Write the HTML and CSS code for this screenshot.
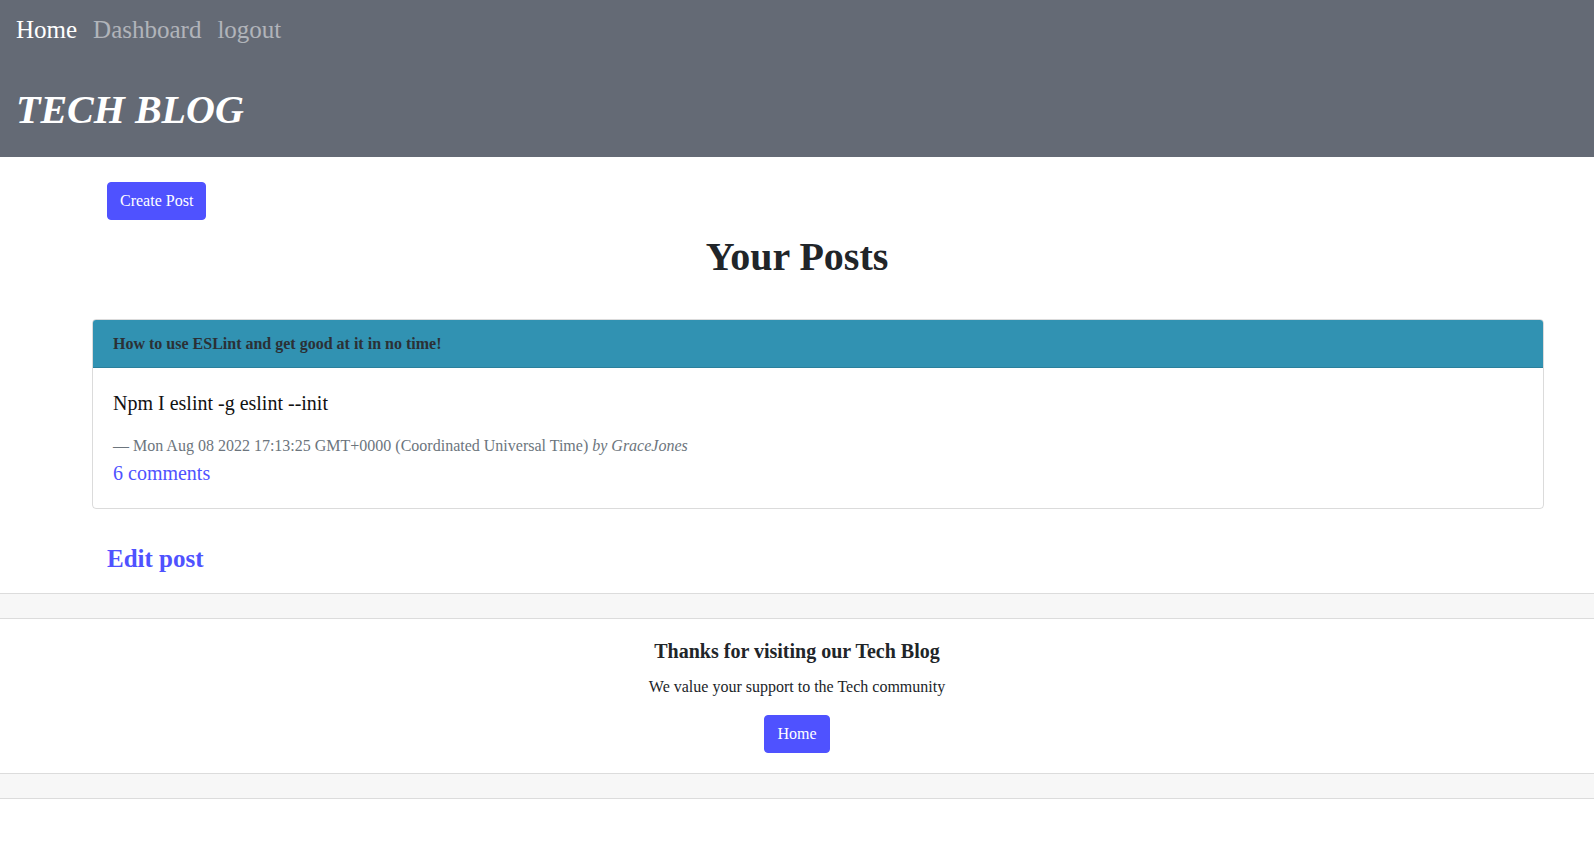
FILE: index.html
```html
<!DOCTYPE html>
<html lang="en">
<head>
<meta charset="utf-8">
<title>Tech Blog</title>
<link rel="stylesheet" href="styles.css">
</head>
<body>
<header class="site-header">
  <nav class="nav">
    <a class="nav-link active" href="#">Home</a>
    <a class="nav-link" href="#">Dashboard</a>
    <a class="nav-link" href="#">logout</a>
  </nav>
  <h1 class="brand">TECH BLOG</h1>
</header>
<main class="main">
  <div class="actions">
    <button class="btn">Create Post</button>
  </div>
  <h1 class="page-title">Your Posts</h1>
  <div class="card">
    <div class="card-header">How to use ESLint and get good at it in no time!</div>
    <div class="card-body">
      <p class="card-title">Npm I eslint -g eslint --init</p>
      <div class="post-meta">— Mon Aug 08 2022 17:13:25 GMT+0000 (Coordinated Universal Time) <cite>by GraceJones</cite></div>
      <a class="comments" href="#">6 comments</a>
    </div>
  </div>
  <a class="edit-link" href="#">Edit post</a>
</main>
<div class="bar"></div>
<footer class="site-footer">
  <h5 class="footer-title">Thanks for visiting our Tech Blog</h5>
  <p class="footer-text">We value your support to the Tech community</p>
  <button class="btn">Home</button>
</footer>
<div class="bar"></div>
</body>
</html>
```

FILE: styles.css
```css
* { box-sizing: border-box; }

html, body {
  margin: 0;
  padding: 0;
  background: #ffffff;
  font-family: "Liberation Serif", "Times New Roman", serif;
  color: #212529;
}

a { text-decoration: none; }

.site-header {
  background: #646a75;
  padding: 15px 16px 23px;
}

.nav {
  display: flex;
  gap: 16px;
  font-size: 25px;
  line-height: 30px;
}

.nav-link { color: rgba(255, 255, 255, 0.5); }
.nav-link.active { color: #ffffff; }

.brand {
  margin: 41px 0 0;
  font-size: 40px;
  line-height: 48px;
  font-weight: bold;
  font-style: italic;
  color: #ffffff;
}

.main {
  padding: 25px 50px 19px 92px;
}

.actions {
  padding-left: 15px;
}

.btn {
  display: inline-block;
  font-family: "Liberation Serif", "Times New Roman", serif;
  font-size: 16px;
  line-height: 24px;
  padding: 6px 12px;
  color: #ffffff;
  background: #4f52ff;
  border: 1px solid #4f52ff;
  border-radius: 4px;
  cursor: pointer;
}

.page-title {
  margin: 13px 0 38px -42px;
  text-align: center;
  font-size: 40px;
  line-height: 48px;
  font-weight: bold;
  color: #212529;
}

.card {
  border: 1px solid rgba(0, 0, 0, 0.14);
  border-radius: 4px;
  overflow: hidden;
}

.card-header {
  background: #3192b2;
  padding: 12px 20px 11px;
  font-size: 16px;
  line-height: 24px;
  font-weight: bold;
  color: #2b3035;
  border-bottom: 1px solid rgba(0, 0, 0, 0.12);
}

.card-body {
  padding: 20px;
  font-size: 20px;
  line-height: 30px;
}

.card-title {
  margin: 0 0 16px;
  font-size: 20px;
  line-height: 30px;
  color: #111111;
}

.post-meta {
  font-size: 16px;
  line-height: 24px;
  color: #6c757d;
}

.post-meta cite { font-style: italic; }

.comments {
  display: block;
  color: #4f52ff;
}

.edit-link {
  display: inline-block;
  margin: 35px 0 0 15px;
  font-size: 25px;
  line-height: 30px;
  font-weight: bold;
  color: #4f52ff;
}

.bar {
  height: 26px;
  background: #f7f7f7;
  border-top: 1px solid #dcdcdc;
  border-bottom: 1px solid #dcdcdc;
}

.site-footer {
  text-align: center;
  padding: 20px 0 20px;
}

.footer-title {
  margin: 0 0 12px;
  font-size: 20px;
  line-height: 24px;
  font-weight: bold;
  color: #212529;
}

.footer-text {
  margin: 0 0 16px;
  font-size: 16px;
  line-height: 24px;
  color: #212529;
}
```
